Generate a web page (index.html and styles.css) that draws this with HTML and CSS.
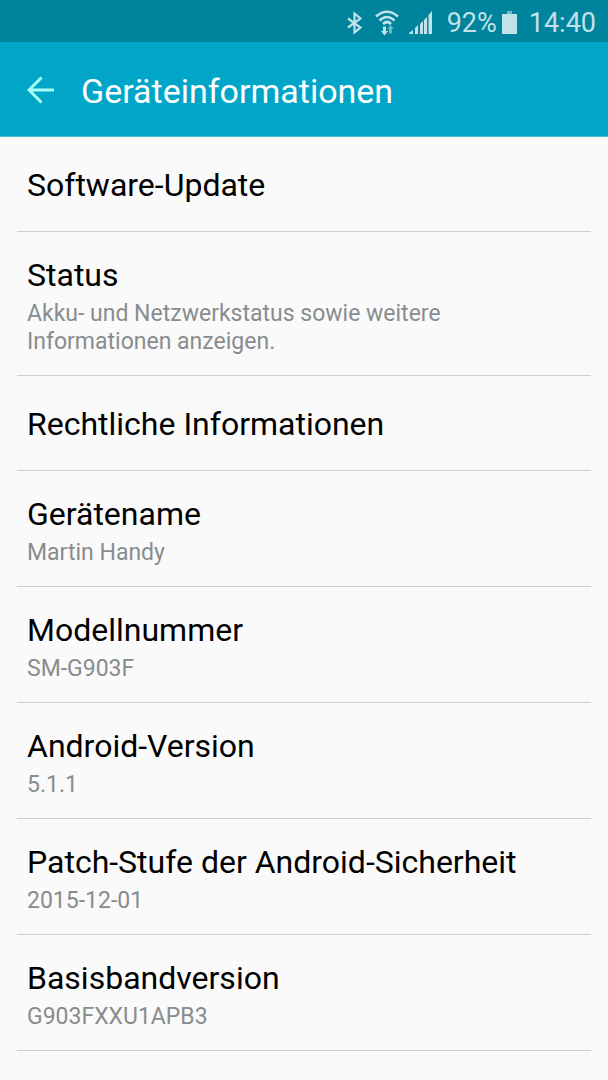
FILE: index.html
```
<!DOCTYPE html>
<html lang="de">
<head>
<meta charset="utf-8">
<meta name="viewport" content="width=device-width, initial-scale=1">
<title>Geräteinformationen</title>
<link rel="stylesheet" href="styles.css">
</head>
<body>
<div class="status-bar">
  <svg class="bluetooth" width="16" height="24" viewBox="0 0 16 24" aria-hidden="true"><path d="M1 7.500 13.500 16.500 7.500 21.500V2.500l6 5L1 16.500" fill="none" stroke="currentColor" stroke-width="2.200"/></svg>
  <svg class="wifi" width="24" height="26" viewBox="0 0 24 26" aria-hidden="true">
    <g fill="none" stroke="currentColor" stroke-width="2.600"><path d="M1 6.500Q12-3 23 6.500M4.500 10.500Q12 3.500 19.500 10.500M8 14Q12 10 16 14"/></g>
    <path d="M8 16.500h3v4.500h2.200L9.500 25.500 5.800 21H8z" fill="currentColor"/>
    <path d="M14 23.500h3V19h1.700L15.500 15l-3.200 4H14z" fill="#6bb9c8"/>
  </svg>
  <svg class="signal" width="24" height="24" viewBox="0 0 24 24" aria-hidden="true"><path d="M0 23v-1l4-3v4zM6 23v-6l3-3v9zM11 23V13l3-3v13zM15 23V9l3-3v17zM19.500 23V4L23 0v23z" fill="currentColor"/></svg>
  <span class="battery-level">92%</span>
  <svg class="battery" width="16" height="24" viewBox="0 0 16 24" aria-hidden="true"><path d="M5 0h5v3H5z" fill="#6bb9c8"/><path d="M0 3h15v20H0z" fill="currentColor"/></svg>
  <time class="clock">14:40</time>
</div>
<header class="app-bar">
  <button class="back" type="button" aria-label="Zurück"><svg width="28" height="28" viewBox="0 0 28 28" aria-hidden="true"><path d="M14.500 1.500 2 14 14.500 26.500M2 14h25" fill="none" stroke="currentColor" stroke-width="3"/></svg></button>
  <h1 class="title">Geräteinformationen</h1>
</header>
<main class="list">
  <a class="row" href="#update"><span class="label">Software-Update</span></a>
  <a class="row detailed" href="#status"><span class="label">Status</span><span class="value">Akku- und Netzwerkstatus sowie weitere Informationen anzeigen.</span></a>
  <a class="row" href="#legal"><span class="label">Rechtliche Informationen</span></a>
  <a class="row detailed" href="#name"><span class="label">Gerätename</span><span class="value">Martin Handy</span></a>
  <a class="row detailed" href="#model"><span class="label">Modellnummer</span><span class="value">SM-G903F</span></a>
  <a class="row detailed" href="#android"><span class="label">Android-Version</span><span class="value">5.1.1</span></a>
  <a class="row detailed" href="#patch"><span class="label">Patch-Stufe der Android-Sicherheit</span><span class="value">2015-12-01</span></a>
  <a class="row detailed" href="#baseband"><span class="label">Basisbandversion</span><span class="value">G903FXXU1APB3</span></a>
</main>
</body>
</html>
```
FILE: styles.css
```
* { box-sizing: border-box; }
body {
  margin: 0;
  background: #fafafa;
  color: #000;
  font-family: Roboto, "Noto Sans", sans-serif;
}
.status-bar {
  display: flex;
  align-items: center;
  justify-content: flex-end;
  height: 42px;
  padding: 3px 12px 0;
  background: #00839d;
  color: #c0e2e8;
  font-size: 27px;
  line-height: 32px;
}
.wifi { margin-left: 12px; }
.signal { margin-left: 10px; }
.battery-level { margin-left: 14px; }
.battery { margin-left: 5px; }
.clock { margin-left: 11px; }
.app-bar {
  display: flex;
  align-items: center;
  gap: 26px;
  height: 95px;
  padding: 2px 27px 0;
  background: #00a5c7;
  border-bottom: 1px solid #4cbcd2;
}
.back {
  display: flex;
  padding: 0;
  border: 0;
  background: none;
  color: #a7fff6;
}
.title {
  margin: 0;
  padding-top: 2px;
  color: #fff;
  font-size: 34px;
  font-weight: 400;
  line-height: 40px;
}
.list { padding: 0 17px; }
.row {
  display: flex;
  flex-direction: column;
  justify-content: center;
  gap: 6px;
  min-height: 95px;
  padding: 2px 10px 0;
  border-bottom: 1px solid #cfcfcf;
  color: inherit;
  text-decoration: none;
}
.detailed { padding: 24px 10px 19px; }
.label {
  font-size: 32px;
  line-height: 38px;
}
.value {
  max-width: 460px;
  color: #898c8e;
  font-size: 23px;
  line-height: 28px;
}
```
